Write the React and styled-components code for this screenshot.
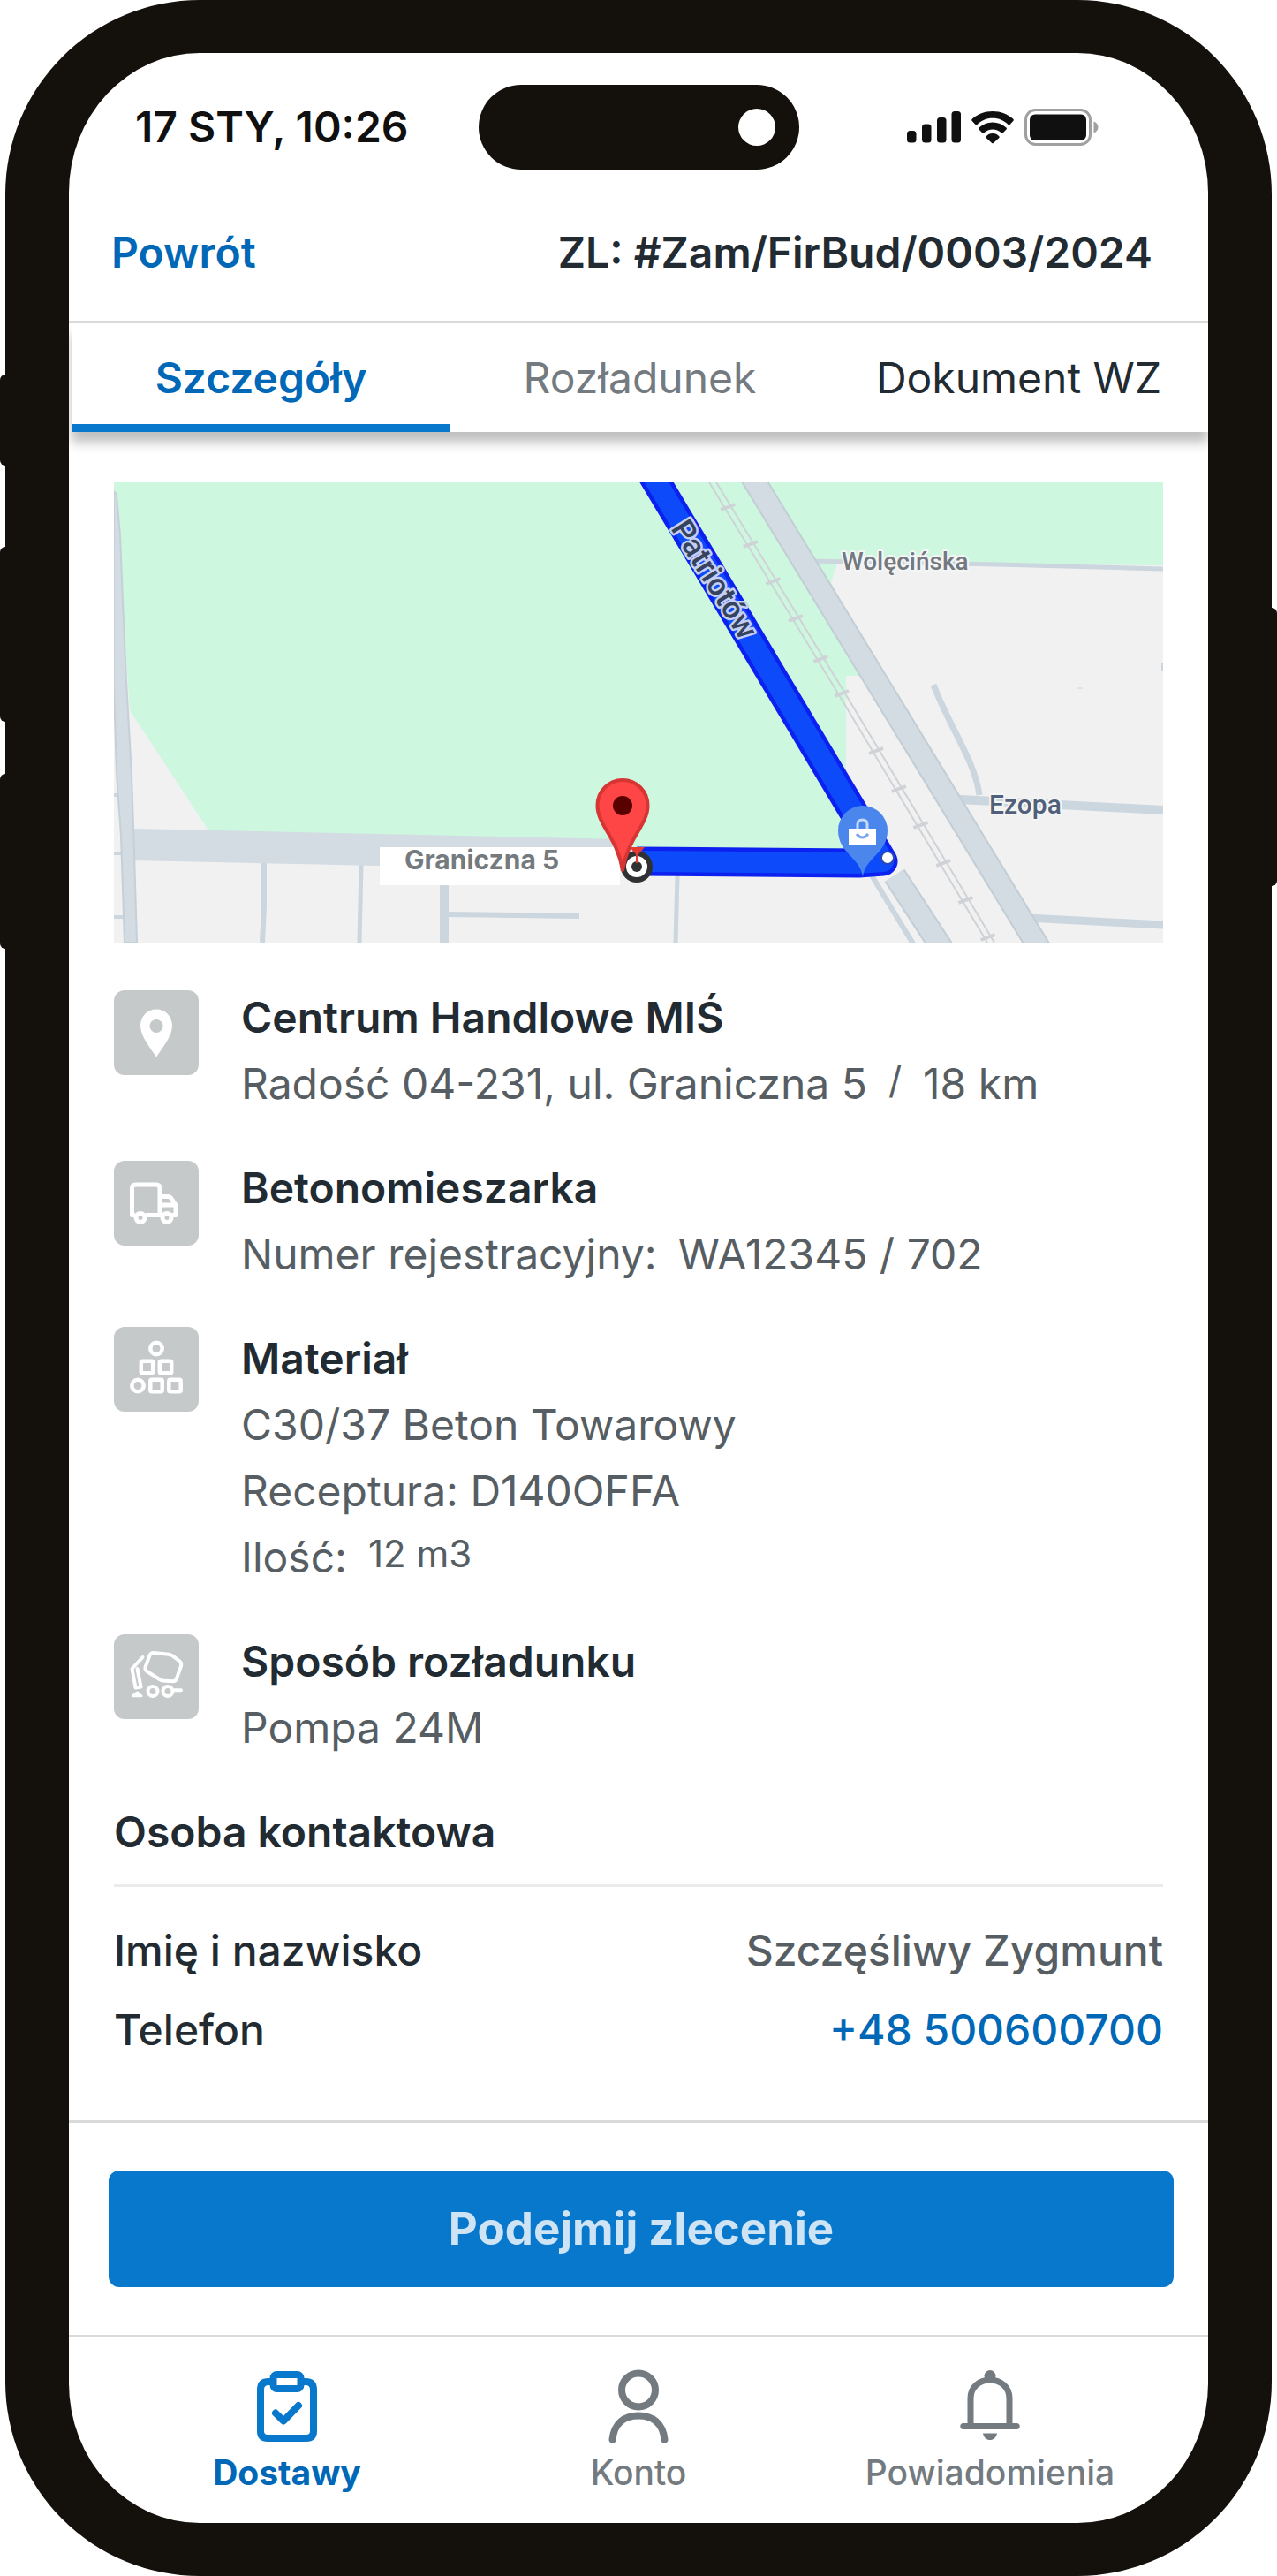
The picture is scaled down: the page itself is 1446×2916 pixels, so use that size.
import React from 'react';
import styled, { createGlobalStyle } from 'styled-components'

const GlobalStyle = createGlobalStyle`
*{
  box-sizing: border-box;
}
body{
  margin: 0;
  background: #fff;
  font-family: Inter, "Liberation Sans", sans-serif;
  font-size: 48px;
  line-height: 72px;
  color: #222b32;
}
h1, h2, p, dl, dt, dd{
  margin: 0;
  font-size: 48px;
  font-weight: 400;
}
a{
  text-decoration: none;
}
button{
  border: 0;
  background: none;
  font: inherit;
  cursor: pointer;
}
svg{
  display: block;
}
`

const Phone = styled.div`
  position: relative;
  padding: 0 6px;
`

const SideButton = styled.span`
  position: absolute;
  top: ${props => props.$top}px;
  ${props => props.$side}: 0;
  width: 12px;
  height: ${props => props.$height}px;
  border-radius: 6px;
  background: #14110c;
`

const Frame = styled.div`
  position: relative;
  background: #14110c;
  border-radius: 220px;
  padding: 60px 72px;
`

const Screen = styled.main`
  background: #fff;
  border-radius: 148px / 158px;
  overflow: hidden;
`

const StatusBar = styled.div`
  display: grid;
  grid-template-columns: 1fr 363px 1fr;
  align-items: center;
  padding-top: 36px;
  color: #101010;
  font-weight: 600;
  time{
    padding-left: 75px;
    white-space: nowrap;
  }
  svg{
    justify-self: end;
    margin-right: 124px;
  }
`

const Island = styled.div`
  display: flex;
  justify-content: flex-end;
  align-items: center;
  height: 96px;
  padding-right: 27px;
  border-radius: 48px;
  background: #14110c;
`

const Camera = styled.span`
  width: 42px;
  height: 42px;
  border-radius: 50%;
  background: #fff;
`

const Header = styled.header`
  display: flex;
  justify-content: space-between;
  padding: 58px 63px 41px 48px;
  border-bottom: 3px solid #d9dadb;
  font-weight: 600;
  a{
    color: #0068b7;
  }
  h1{
    font-weight: 600;
  }
`

const Tabs = styled.nav`
  display: grid;
  grid-template-columns: repeat(3, 1fr);
  margin-left: 3px;
  box-shadow: 0 12px 12px rgba(0, 0, 0, 0.25);
`

const Tab = styled.button`
  height: 123px;
  padding: 0;
  color: ${props => props.$color};
  font-weight: ${props => props.$active ? 600 : 400};
  box-shadow: ${props => props.$active ? 'inset 0 -9px #0878cd' : 'none'};
`

const Content = styled.section`
  padding: 57px 51px 66px;
`

const Map = styled.svg`
  width: 100%;
  height: auto;
  margin-bottom: 49px;
`

const List = styled.div`
  display: grid;
  gap: 46px;
  margin-bottom: 46px;
`

const Item = styled.article`
  display: flex;
  gap: 48px;
`

const Tile = styled.div`
  flex: none;
  width: 96px;
  height: 96px;
  margin-top: ${props => props.$flush ? 0 : 5}px;
  border-radius: 12px;
  background: #c5c9ca;
`

const Lines = styled.div`
  display: grid;
  gap: 3px;
  color: #565e63;
  h2{
    color: #222b32;
    font-weight: 600;
  }
`

const Line = styled.p`
  display: flex;
  gap: 24px;
`

const Small = styled.span`
  font-size: 42px;
  line-height: 63px;
`

const ContactTitle = styled.h2`
  && {
    padding-bottom: 23px;
    border-bottom: 3px solid #e9ebed;
    font-weight: 600;
  }
`

const Contact = styled.dl`
  display: grid;
  gap: 18px;
  padding-top: 36px;
  div{
    display: flex;
    justify-content: space-between;
  }
  dt, dd{
    font-weight: 500;
  }
  dd{
    color: #565e63;
  }
  a{
    color: #0068b7;
  }
`

const Action = styled.section`
  padding: 54px 39px 54px 45px;
  border-top: 3px solid #d9dadb;
  border-bottom: 3px solid #d9dadb;
`

const Submit = styled.button`
  display: block;
  width: 100%;
  height: 132px;
  border-radius: 12px;
  background: #0878cd;
  color: #cee4f5;
  font-size: 51px;
  font-weight: 700;
`

const BottomNav = styled.nav`
  display: grid;
  grid-template-columns: repeat(3, 1fr);
  padding: 36px 48px 30px;
`

const NavLink = styled.a`
  display: grid;
  justify-items: center;
  gap: 6px;
  font-size: 39px;
  line-height: 54px;
  font-weight: ${props => props.$active ? 700 : 500};
  color: ${props => props.$active ? '#0068b7' : '#747b80'};
  svg{
    color: ${props => props.$active ? '#0878cd' : '#747b80'};
  }
`

function StatusIcons() {
  return (
    <svg width="217" height="42" viewBox="0 0 217 42" fill="#101010">
      <rect x="0" y="25" width="10.5" height="13.5" rx="3.5" />
      <rect x="17" y="17.5" width="10.5" height="21" rx="3.5" />
      <rect x="34" y="10" width="10.5" height="28.5" rx="3.5" />
      <rect x="50.5" y="3" width="10.5" height="35.5" rx="3.5" />
      <path d="M97 10.8C104 10.8 110 13.500 114.500 18Q115.500 19 116.500 18L120.500 13.800Q121.300 12.800 120.300 11.800C114 6 106 3 97 3S80 6 73.700 11.800Q72.700 12.800 73.500 13.800L77.500 18Q78.500 19 79.500 18C84 13.500 90 10.800 97 10.800Z" />
      <path d="M97 23.500C101 23.500 104 25 107 27.500Q108 28.300 108.800 27.300L112.500 23.500Q113.500 22.500 112.400 21.500C108 17.500 103 15.500 97 15.500S86 17.500 81.600 21.500Q80.500 22.500 81.500 23.500L85.200 27.300Q86 28.300 87 27.500C90 25 93 23.500 97 23.500Z" />
      <path d="M104.500 31.500Q105 32.300 104.400 33L97.800 39Q97 39.700 96.200 39L89.600 33Q89 32.300 89.500 31.500C91.500 29 94 28 97 28S102.500 29 104.500 31.500Z" />
      <rect x="134.500" y="1.500" width="73" height="39" rx="11" fill="none" stroke="#a0a0a0" strokeWidth="3" />
      <rect x="139" y="6.500" width="64" height="29.500" rx="6" />
      <path d="M211.500 14.500V27.500C214.500 26.500 216.500 24 216.500 21S214.500 15.500 211.500 14.500Z" fill="#a0a0a0" />
    </svg>
  )
}

function PinIcon() {
  return (
    <svg width="96" height="96" viewBox="0 0 96 96">
      <path d="M48 21.500C58 21.500 66 29.500 66 40C66 52 55 65 48 75.500C41 65 30 52 30 40C30 29.500 38 21.500 48 21.500Z" fill="#fff" />
      <circle cx="48" cy="40.500" r="7.500" fill="#c5c9ca" />
    </svg>
  )
}

function TruckIcon() {
  return (
    <svg width="96" height="96" viewBox="0 0 96 96" fill="none" stroke="#fff" strokeWidth="5" strokeLinejoin="round">
      <path d="M24 61.500H20.500V31Q20.500 27 24.500 27H48Q52 27 52 31V61.500H36M52 61.500H54M65 61.500H70V50L64 41.500Q63 40.500 61.500 40.500H52M54 50H70" />
      <circle cx="30" cy="64.500" r="5" />
      <circle cx="60" cy="64.500" r="5" />
    </svg>
  )
}

function MaterialIcon() {
  return (
    <svg width="96" height="96" viewBox="0 0 96 96" fill="none" stroke="#fff" strokeWidth="4.500">
      <circle cx="48" cy="24.500" r="6.700" />
      <rect x="30.800" y="38.800" width="13.400" height="13.400" rx="1.500" />
      <rect x="51.800" y="38.800" width="13.400" height="13.400" rx="1.500" />
      <circle cx="27" cy="66.500" r="6.700" />
      <rect x="41.300" y="59.800" width="13.400" height="13.400" rx="1.500" />
      <rect x="62.300" y="59.800" width="13.400" height="13.400" rx="1.500" />
    </svg>
  )
}

function MixerIcon() {
  return (
    <svg width="96" height="96" viewBox="0 0 96 96" fill="none" stroke="#fff" strokeWidth="4" strokeLinejoin="round" strokeLinecap="round">
      <path d="M45 21L62 22.800Q65 23.300 67 24.800L74.500 30.500Q77 32.500 76 36L71 50Q69.800 53.300 66.500 53.200L55.500 52.500Q53.500 52.200 52 51.300L37.500 42Q34.500 40 35.800 36.500L40.500 24Q42 20.800 45 21Z" />
      <path d="M32.500 26L20.500 39L24.500 60.500L30.500 59.500L26.500 39" />
      <path d="M26.500 66L21.500 69.800H31Z" fill="#fff" strokeWidth="3" />
      <circle cx="44" cy="64.500" r="5.500" />
      <circle cx="61" cy="64.500" r="5.500" />
      <path d="M67 63.200H76" />
    </svg>
  )
}

function ClipboardIcon() {
  return (
    <svg width="68" height="84" viewBox="0 0 68 84" fill="none" stroke="currentColor" strokeWidth="8" strokeLinejoin="round" strokeLinecap="round">
      <path d="M16 14H13Q4 14 4 23V70Q4 78 12 78H56Q64 78 64 70V23Q64 14 55 14H52" />
      <rect x="18.500" y="6" width="31" height="16" rx="4" />
      <path d="M21 49.500L30 58.500L47 41" />
    </svg>
  )
}

function UserIcon() {
  return (
    <svg width="68" height="84" viewBox="0 0 68 84" fill="none" stroke="currentColor" strokeWidth="8" strokeLinecap="round">
      <circle cx="34" cy="23.500" r="19" />
      <path d="M4.500 79.500C6.500 61 18 52.500 34 52.500S61.500 61 63.500 79.500" />
    </svg>
  )
}

function BellIcon() {
  return (
    <svg width="68" height="84" viewBox="0 0 68 84" fill="none" stroke="currentColor" strokeWidth="7" strokeLinecap="round">
      <path d="M12 64V33C12 20 22 12 34 12S56 20 56 33V64M3.800 64.500H64.200" />
      <circle cx="34" cy="7.500" r="6.500" fill="currentColor" stroke="none" />
      <path d="M26 72.500H42C41 77.500 38 80 34 80S27 77.500 26 72.500Z" fill="currentColor" stroke="none" />
    </svg>
  )
}

const sleepers = [28, 70, 112, 154, 200, 239, 304, 347, 388, 431, 473, 515]

function RouteMap() {
  return (
    <Map viewBox="0 0 1188 521" role="img" aria-label="Mapa dojazdu">
      <rect width="1188" height="521" fill="#f1f1f1" />
      <path d="M0 0H1188V94L820 90L812 113L866 219H829V416H628L107 394L18 258L0 0Z" fill="#cdf7df" />

      {/* streets */}
      <g fill="none" stroke="#cbd6df">
        <path d="M170 428V480L168 521" strokeWidth="6" />
        <path d="M280 432L278 521" strokeWidth="5" />
        <path d="M374 450V521" strokeWidth="10" />
        <path d="M379 489L527 491" strokeWidth="6" />
        <path d="M638 445L636 521" strokeWidth="5" />
        <path d="M790 89L1000 93L1188 98" strokeWidth="5" />
        <path d="M928 229C945 275 975 315 980 354" strokeWidth="7" />
        <path d="M958 359L1188 371" strokeWidth="10" />
        <path d="M1035 493L1188 501" strokeWidth="9" />
        <path d="M1188 205V214" strokeWidth="4" />
        <path d="M1091 233H1097" strokeWidth="1" />
        <path d="M858 445L906 524" strokeWidth="6" />
        <path d="M0 354H6M0 420H10M0 492H12" strokeWidth="4" />
      </g>
      <path d="M22 392L575 404V440L22 428Z" fill="#d3dbe3" />
      <path d="M0 10L3 14L7 60L10 135L14 224L20 331L23 420L26 521H12L8 400L3 331L0 230Z" fill="#d3dbe3" stroke="#c5d0d8" strokeWidth="2" />
      <g fill="none">
        <path d="M884 445L940 531M720 -10L1050 531" stroke="#c2cdd4" strokeWidth="27" />
        <path d="M884 445L940 531M720 -10L1050 531" stroke="#d3dbe3" strokeWidth="23" />
      </g>

      {/* railway */}
      <g fill="none" stroke="#cfd2d6" strokeWidth="2">
        <path d="M674 0L820 239L989 521M682 0L828 239L997 521" />
        {sleepers.map(y => {
          const x = y < 240 ? 678 + y * 0.611 : 824 + (y - 239) * 0.6
          return <path key={y} d={`M${x - 8} ${y + 3}L${x + 8} ${y - 3}`} strokeWidth="4" />
        })}
      </g>

      {/* route */}
      <g fill="none" strokeLinejoin="round">
        <path d="M605 -16L871 429L843 431L592 429" stroke="#0c20ef" strokeWidth="33" />
        <path d="M605 -16L871 429L843 431L592 429" stroke="#0d4af9" strokeWidth="24" />
      </g>
      <circle cx="876" cy="425" r="7" fill="#fff" stroke="#2848b8" strokeWidth="2" />

      <path d="M848 447C846 425 820 420 820 394A28 28 0 0 1 876 394C876 420 850 425 848 447Z" fill="#4a86ec" />
      <path d="M832 392H863V411H832Z" fill="#fff" />
      <path d="M842 392V387Q842 382 847.500 382T853 387V392" fill="none" stroke="#c5d9fa" strokeWidth="3" />
      <path d="M841 398Q847.500 406 854 398" fill="none" stroke="#78a5f0" strokeWidth="3" />

      <g fontFamily="Roboto, sans-serif" fontWeight="500" paintOrder="stroke" strokeLinejoin="round">
        <text x="824" y="99" fontSize="28" fill="#747980" stroke="#f4f6f6" strokeWidth="4">Wolęcińska</text>
        <text x="991" y="375" fontSize="30" fill="#51607a" stroke="#f4f6f6" strokeWidth="4">Ezopa</text>
        <text transform="translate(630 52) rotate(58)" fontSize="35" fill="#36435c" stroke="#c5cff5" strokeWidth="5">Patriotów</text>
      </g>

      <rect x="301" y="413" width="272" height="43" fill="#fff" />
      <text x="329" y="438" fontFamily="Inter, sans-serif" fontSize="30" fontWeight="700" fill="#747b80">Graniczna 5</text>

      {/* destination */}
      <circle cx="592" cy="435" r="15" fill="#fff" stroke="#2f3133" strokeWidth="6" />
      <circle cx="592" cy="435" r="6" fill="#2f3133" />
      <path d="M584 413H601L594 421V431H591V421Z" fill="#e63a30" />
      <path d="M576 337C592 337 604.500 350 604.500 366C604.500 388 582 402 576 439C570 402 547.500 388 547.500 366C547.500 350 560 337 576 337Z" fill="#ff4646" stroke="#d73534" strokeWidth="4" strokeLinejoin="round" />
      <circle cx="576" cy="366" r="11" fill="#590000" />
    </Map>
  )
}

function App() {
  return (
    <Phone>
      <GlobalStyle />
      <SideButton $side="left" $top={424} $height={103} />
      <SideButton $side="left" $top={619} $height={198} />
      <SideButton $side="left" $top={876} $height={198} />
      <SideButton $side="right" $top={688} $height={315} />
      <Frame>
        <Screen>
          <StatusBar>
            <time>17 STY, 10:26</time>
            <Island><Camera /></Island>
            <StatusIcons />
          </StatusBar>

          <Header>
            <a href="#powrot">Powrót</a>
            <h1>ZL: #Zam/FirBud/0003/2024</h1>
          </Header>

          <Tabs>
            <Tab type="button" $active $color="#0068b7">Szczegóły</Tab>
            <Tab type="button" $color="#747b80">Rozładunek</Tab>
            <Tab type="button" $color="#222b32">Dokument WZ</Tab>
          </Tabs>

          <Content>
            <RouteMap />
            <List>
              <Item>
                <Tile><PinIcon /></Tile>
                <Lines>
                  <h2>Centrum Handlowe MIŚ</h2>
                  <Line>
                    <span>Radość 04-231, ul. Graniczna 5</span>
                    <Small>/</Small>
                    <span>18 km</span>
                  </Line>
                </Lines>
              </Item>
              <Item>
                <Tile><TruckIcon /></Tile>
                <Lines>
                  <h2>Betonomieszarka</h2>
                  <Line>
                    <span>Numer rejestracyjny:</span>
                    <span>WA12345 / 702</span>
                  </Line>
                </Lines>
              </Item>
              <Item>
                <Tile $flush><MaterialIcon /></Tile>
                <Lines>
                  <h2>Materiał</h2>
                  <Line>C30/37 Beton Towarowy</Line>
                  <Line>Receptura: D140OFFA</Line>
                  <Line>
                    <span>Ilość:</span>
                    <Small>12 m3</Small>
                  </Line>
                </Lines>
              </Item>
              <Item>
                <Tile><MixerIcon /></Tile>
                <Lines>
                  <h2>Sposób rozładunku</h2>
                  <Line>Pompa 24M</Line>
                </Lines>
              </Item>
            </List>

            <ContactTitle>Osoba kontaktowa</ContactTitle>
            <Contact>
              <div>
                <dt>Imię i nazwisko</dt>
                <dd>Szczęśliwy Zygmunt</dd>
              </div>
              <div>
                <dt>Telefon</dt>
                <dd><a href="tel:+48500600700">+48 500600700</a></dd>
              </div>
            </Contact>
          </Content>

          <Action>
            <Submit type="button">Podejmij zlecenie</Submit>
          </Action>

          <BottomNav>
            <NavLink href="#dostawy" $active><ClipboardIcon />Dostawy</NavLink>
            <NavLink href="#konto"><UserIcon />Konto</NavLink>
            <NavLink href="#powiadomienia"><BellIcon />Powiadomienia</NavLink>
          </BottomNav>
        </Screen>
      </Frame>
    </Phone>
  )
}

export default App;
